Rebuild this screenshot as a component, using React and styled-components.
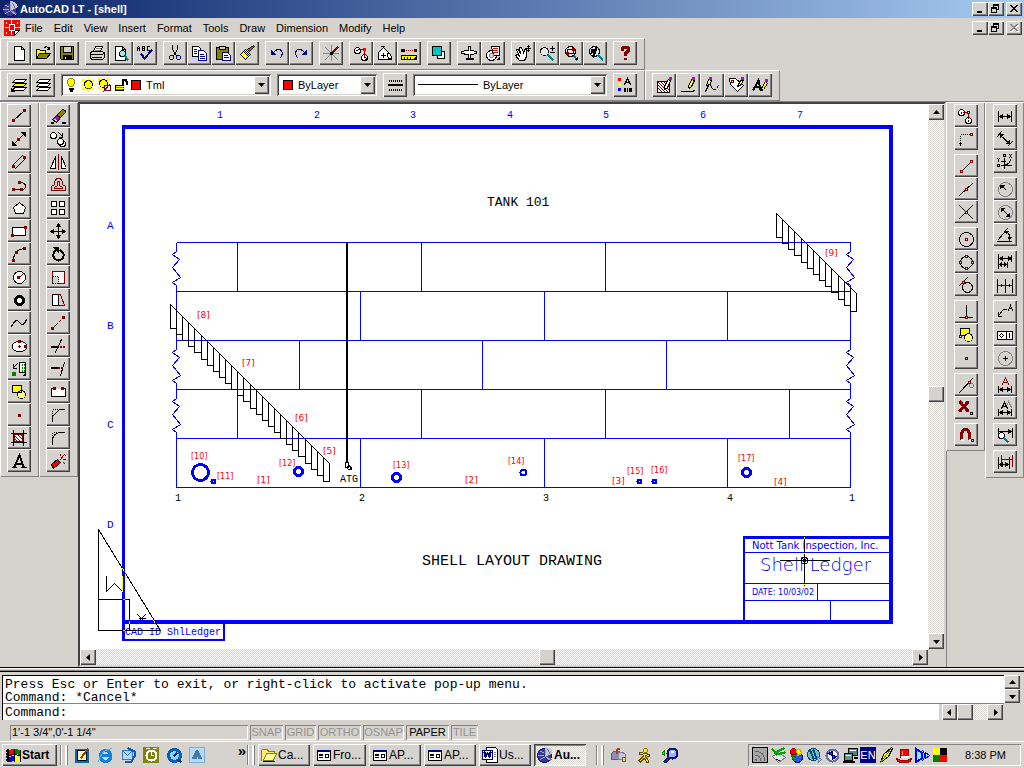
import React from "react";
import styled, { createGlobalStyle, css } from "styled-components";

const FACE = "#d6d3ce";
const SHADOW = "#848284";
const DARK = "#424142";
const BLUE = "#0000ff";

const Global = createGlobalStyle`
  *, *::before, *::after { box-sizing: border-box; }
  body { margin: 0; background: ${FACE}; }
  button, input, select { font: inherit; color: inherit; }
`;

const raised = css`
  box-shadow: inset 1px 1px #fff, inset -1px -1px ${DARK}, inset -2px -2px ${SHADOW};
`;
const sunken = css`
  box-shadow: inset 1px 1px ${SHADOW}, inset -1px -1px #fff;
`;
const dither = css`
  background: repeating-conic-gradient(#fff 0 25%, ${FACE} 0 50%) 0 0 / 2px 2px;
`;

/* ---------- icon drawing ---------- */

const K = "#000";
const R = "#840000";
const N = "#000084";
const Y = "#ffff00";
const W = "#fff";
const G = "#848284";
const O = "#848200";
const RED = "#ff0000";

const circ = (x, y, r) => `M${x - r} ${y}a${r} ${r} 0 1 0 ${2 * r} 0a${r} ${r} 0 1 0 ${-2 * r} 0`;
const dot = (x, y, c = R) => [`M${x - 1} ${y - 1}h2v2h-2z`, c, c];
const ring = (x, y) => [`M${x - 1} ${y - 1}h2v2h-2z`, R, W];
const corner = ["M14 12v2h-2z", K, K];

const icons = {
  new: [["M3 1h7l3 3v11h-10zM10 1v3h3", K, W]],
  open: [["M1 13v-9h3l1 1h5v3", K, Y], ["M1 13l3-5h11l-4 5z", K, O], ["M9 2q3-2 5 2M14 2v2h-2", K]],
  save: [["M1 1h13v13h-12l-1-1z", K, O], ["M4 1h8v6h-8z", K, FACE], ["M4 14v-4h8v4", K, K], ["M6 12v1", W]],
  print: [["M4 6l2-5h7l-2 5", K, W], ["M1 7l2-1h10l2 2v4l-2 2h-11l-1-2z", K, FACE], ["M1 9h12l2-2M3 12h9", K], ["M7 3h4M6 5h4", G], ["M10 10h2", Y]],
  preview: [["M2 1h7l3 3v11h-10zM9 1v3h3", K, W], [circ(9, 8, 3), K, "#a5e7e7"], ["M12 11l2 3", "#008284", "none", 2]],
  spell: [["M0 5v-3l1-1l1 1v3M1 3h1M5 1v4h2v-4zM5 3h2M12 1h-2v4h2", K], ["M4 9l3 4l7-8", N, "none", 2]],
  cut: [["M5 0v4l4 6M10 0v4l-4 6", K], [circ(4, 12, 2), N], [circ(11, 12, 2), N]],
  copy: [["M1 1h6l2 2v8h-8z", K, W], ["M7 5h5l3 3v7h-8z", N, W], ["M3 4h2M3 6h2M3 8h2M9 9h3M9 11h4M9 13h4", N]],
  paste: [["M1 2h12v12h-12z", K, O], ["M4 1h6v3h-6z", K, FACE], ["M7 7h5l3 3v5h-8z", N, W], ["M9 10h3M9 12h4", N]],
  brush: [["M14 0l1 1l-5 5l-2-2z", K, "#c65d00"], ["M6 4l5 5l-1 1l-5-5z", K, W], ["M4 6l5 5l-3 3l-5-5z", K, Y], ["M0 14l2-1l2 2", Y]],
  undo: [["M2 5v4h4z", N, N], ["M4 7q4-5 8-2q2 3-1 7", N]],
  redo: [["M13 5v4h-4z", N, N], ["M11 7q-4-5-8-2q-2 3 1 7", N]],
  track: [["M8 0v15M0 8h15M2 2l12 12M2 14l6-6", G], ["M9 7l5-5", R, "none", 2], ["M7 7h2v2h-2z", K, K]],
  osnap: [[circ(4, 5, 3), K, W], [circ(11, 12, 3), K, W], ["M5 4h6v7", R], dot(11, 4, RED), ["M3 5h1M11 12h1", K], corner],
  ucs: [["M1 7l5-5l5 5v7h-10z", K, W], ["M4 10h4M6 8v4", K], ["M10 8q3-1 4 4l-3 2z", K, W], ["M4 1h3", K], corner],
  dist: [["M1 5h1M14 5h1", K, K, 3], ["M4 5h9", R, "none", 1, "1 1"], ["M0 10h15v4h-15z", K, Y], ["M3 12v1M6 12v1M9 12v1", K], corner],
  redraw: [["M6 6h7v7h-7z", K, W], ["M1 1h9v9h-9z", K, "#00c3c6"]],
  aerial: [["M7 1h2v13h-2z", K, W], ["M0 6l6-1h4l5 1v2l-5 1h-4l-6-1z", K, W], ["M5 13h6", K, "none", 2], ["M8 3v9", W]],
  named: [[circ(6, 10, 5), K, W], ["M6 1h8v9h-6z", K, W], ["M8 3h4M8 5h4M8 7h4", RED], [circ(6, 10, 2), G, FACE], corner],
  pan: [["M4 15l-4-5l2-1l2 2l-3-7l2 0l2 4l-1-6h2l2 5l2-4l1 1v7l-2 4z", K, W], ["M13 0v6M10 3h6M12 1h2M12 5h2", K]],
  zoomrt: [[circ(5, 6, 4), K, "#e7e7e7"], ["M9 10l4 4", "#008284", "none", 2], ["M11 3h4M13 1v4M11 7h4", K]],
  zoomwin: [[circ(7, 6, 5), K, "#ffe7e7"], ["M4 4h6v4h-6z", K], dot(4, 8, R), dot(10, 4, R), ["M11 11l2 3", "#008284", "none", 2], corner],
  zoomprev: [[circ(7, 6, 5), K, "#e7e7e7"], ["M4 4h5l-3 3v4M4 4v4", K, K], ["M11 10l4 4", "#008284", "none", 2], ["M9 2l-3 9", K, "none", 2]],
  help: [["M5 4v-1l1-1h4l1 1v2l-3 3v1", R, "none", 3], ["M7 13h1", R, "none", 2]],
  layers: [["M1 13h11l3-3h-11z", K, W], ["M1 9h11l3-3h-11z", K, Y], ["M1 5h11l3-3h-11z", K, W], ["M0 13l3-3M0 11v3h3", K]],
  layers2: [["M1 13h11l3-3h-11z", K, W], ["M1 9h11l3-3h-11z", K, W], ["M1 5h11l3-3h-11z", K, W]],
  bulb: [["M4 9l-2-3v-3l2-2h3l2 2v3l-2 3z", O, Y], ["M4 11h3M5 13h1", K, "none", 2], ["M4 3v1", W]],
  sun: [["M1 2h2v2h-2zM11 2h1v2h-1zM1 11h2v1h-2zM11 11h1v1h-1zM6 1h2M6 13h2M1 7h1M12 7h1", Y, Y], [circ(7, 7, 4), K, Y], ["M4 3h6M4 11h6", O, "none", 1, "1 1"]],
  sunvp: [["M1 1h2v2h-2zM10 1h1v2h-1zM1 10h2v1h-2zM6 0h1M6 12h1M0 6h1", Y, Y], [circ(6, 6, 4), K, Y], ["M7 8h6v5h-6z", R, W], ["M12 7l-6 7", R]],
  lock: [["M2 8h8v5h-8z", K, O], ["M3 9h7M3 11h7", Y], ["M9 7v-3l1-2h2l1 2v2", K, "none", 2]],
  lweight: [["M1 3h14M1 12h14", K, "none", 2, "1 1"], ["M1 7h13", K, "none", 2]],
  props: [["M1 1h2v2h-2z", RED, RED], ["M1 6h2v2h-2z", Y, Y], ["M1 11h2v2h-2z", BLUE, BLUE], ["M7 7l3-6l3 6M8 5h4", K], ["M7 11h1v3h-1zM10 11v3M12 11h2v3h-2z", K, K]],
  edhatch: [["M1 4h12v11h-12z", K, W], ["M2 5l9 9M5 5l7 7M2 8l6 6M2 11l3 3M8 5l4 4", R], ["M12 2l-4 7v3l3-2l3-7z", K, W], dot(14, 1, "#c600c6")],
  edpline: [["M1 14h11l2-1", K], ["M11 2l-3 7l1 2l2-2l3-6z", K, Y], dot(13, 1, "#c600c6")],
  edspline: [["M1 14l4-8q4 9 7 5l2-3", K], ["M4 2l-2 6l4-1l1-4z", K, Y], dot(6, 1, "#c600c6")],
  edattr: [["M1 1h6l8 7l-6 6l-7-7z", K, W], [circ(4, 4, 1), R], ["M12 3l-3 6l3-1l3-5z", K, Y], dot(14, 1, "#c600c6")],
  edtext: [["M1 12l5-9l2 9M3 9h4", K, "none", 2], ["M13 4l-4 7v2l2-1l4-6z", K, Y], dot(14, 3, "#c600c6")],
  line: [["M2 12l11-10", K], dot(2, 12), dot(13, 2)],
  xline: [["M1 14l13-13", K], ["M1 14v-4l4 4zM14 1v4l-4-4z", K, K], dot(7, 8)],
  mline: [["M1 11l10-10l3 3l-10 10z", K], dot(2, 12), dot(13, 3)],
  pline: [["M2 12h9q4-1 3-4q-1-3-5-3", K], dot(2, 12), dot(10, 12), dot(8, 5)],
  polygon: [["M8 2l6 5l-2 6h-8l-2-6z", K, W]],
  rect: [["M1 4h13v8h-13z", K, W], dot(1, 12), dot(14, 4)],
  arc: [["M2 14q0-11 11-12", K], dot(2, 14), dot(5, 6), dot(13, 2)],
  circle: [[circ(8, 8, 6), K, W], ["M8 8l3-3", R], dot(7, 8)],
  donut: [[circ(8, 8, 4), K, W, 3]],
  spline: [["M0 11q4-9 8-4t7-3", K]],
  ellipse: [["M1 8q0-5 7-5t7 5t-7 5t-7-5", K, W], dot(8, 3), dot(14, 8), ["M7 8h2M8 7v2", R]],
  insert: [["M8 1h6v10h-6z", K, W], ["M10 3h4M10 6h4M10 9h4", "#008200", "none", 2, "1 1"], ["M1 11h3v3h-3z", "#008200", "#008200"], ["M6 2l-4 4M2 3v4h3", K], corner],
  region: [["M1 1h9v7h-9z", K, Y], [circ(10, 10, 4), K, "#ffff84"], ["M5 8h5v-3", K]],
  point: [dot(8, 8)],
  hatch: [["M2 0v15M12 0v15M0 3h15M0 12h15", K], ["M3 4h8v7h-8z", R, W], ["M3 5l6 6M6 4l5 5M3 8l3 3M9 4l2 2", R]],
  mtext: [["M3 13l5-11l4 11M5 10h5", K, "none", 2], ["M1 14h4M10 14h5", K]],
  erase: [["M1 14h1M12 14h2", K, "none", 2], ["M2 11l4-4l4 2l-4 5z", K, "#c600c6"], ["M6 7l6-6l3 1v2l-5 5z", K, O], ["M4 11l2 1", W]],
  copyobj: [[circ(3, 4, 3), K, W], [circ(12, 12, 3), K, W], [circ(10, 10, 3), K, W], ["M8 1l4 4M12 2v4h-3", K]],
  mirror: [["M5 2v12h-5z", K, W], ["M11 2v12h5z", K, W], ["M8 0v15", R]],
  offset: [["M1 13v-4l3-2q0-6 4-6t4 6l3 2v4z", R, FACE], ["M4 11v-1l3-2v-4h2v4l3 2v1z", R]],
  array: [["M1 1h5v5h-5zM9 1h5v5h-5zM1 9h5v5h-5zM9 9h5v5h-5z", K, W]],
  move: [["M8 1v14M1 8h14", K], ["M8 0l2 3h-4zM8 15l2-3h-4zM0 8l3-2v4zM15 8l-3-2v4z", K, K]],
  rotate: [["M5 4q-4 4-1 8q4 4 8 0q3-5-2-8", K, "none", 2], ["M3 1h5v5z", K, K]],
  scale: [["M2 2h12v12h-12z", R, W], ["M2 7h6v7h-6z", K, FACE, 1, "1 1"]],
  stretch: [["M2 2h6v11h-6z", K, W], ["M8 2h2l4 11h-6", R], ["M8 2v11", K, W, 1, "1 1"]],
  lengthen: [["M2 13l4-4", K], ["M6 9l7-7", R, "none", 1, "2 2"], dot(2, 13), dot(13, 2)],
  trim: [["M1 8h6", K, "none", 2], ["M9 8h6", R, "none", 2, "2 1"], ["M5 14l6-13", K]],
  extend: [["M1 6h5", K, "none", 2], ["M7 6h5", R, "none", 2, "2 1"], ["M10 14l4-13", K]],
  breakobj: [["M4 4h-3v8h14v-8h-3", K, W], dot(4, 4), dot(12, 4)],
  chamfer: [["M2 14v-5l7-7h5", K], ["M2 8v-6h6", K, "none", 1, "1 1"]],
  fillet: [["M2 14v-5q1-6 7-7h5", K], ["M2 7v-5h6", K, "none", 1, "1 1"]],
  explode: [["M1 11l6-5l3 3l-7 6z", K, RED], ["M10 6l3-4M13 6h2M10 2v-1M15 2l-1-1M13 9l1 1", R], ["M3 12l4-4", RED]],
  temptrack: [[circ(3, 4, 3), K, W], [circ(10, 12, 3), K, W], ["M3 4v1M10 12v1", K], ["M5 4h5v6", R], ring(10, 4)],
  snapfrom: [["M2 13v-10h9", K, "none", 1, "1 1"], ["M1 12h2M2 13v1", K], ring(13, 3)],
  endp: [["M3 13l10-10", K], ring(3, 13), ring(13, 3)],
  midp: [["M1 14l13-12", K], ring(8, 8)],
  inter: [["M1 1l13 13M14 1l-13 13", K], ring(8, 8)],
  center: [[circ(8, 8, 7), K], ring(8, 8)],
  quad: [[circ(8, 8, 6), K], ring(8, 2), ring(2, 8), ring(14, 8), ring(8, 14)],
  tangent: [[circ(9, 10, 5), K], ["M1 8l8-8", K], ring(5, 5)],
  perp: [["M8 1v12M1 13h13", K], ring(8, 13)],
  insp: [["M2 1h9v7h-9z", K, Y], [circ(10, 10, 4), K, "#ffff84"], ring(2, 9)],
  node: [ring(8, 8)],
  near: [["M1 15l13-14", K], [circ(13, 8, 2), G], ring(11, 5)],
  none: [["M2 2l7 8M9 2l-7 8", R, "none", 3], ["M12 12h2v2h-2z", K, W]],
  magnet: [["M3 11v-5q1-4 4-4t4 4v5", R, "none", 3], ["M3 12h1M11 12h1", W, "none", 2], ring(14, 13)],
  dlin: [["M1 3v10M14 3v10M1 8h13", K], ["M2 8l3-2v4zM13 8l-3-2v4z", K, K]],
  dali: [["M0 5l4-5M11 14l4-4M3 4l9 8", K], ["M3 3h3l-3 3zM12 12v-3l-3 3z", K, K]],
  dord: [["M0 4l1 1l1-1M1 5v2M6 0h2v2h-2zM12 0l2 3M14 0l-2 3M0 10h2v2h-2z", K], ["M7 4v10M4 7h4M4 11h10M8 10q4 0 5-5", K]],
  drad: [[circ(8, 8, 7), G], ["M8 8l-4-4", K], ["M3 4h4l-4 3z", K, K]],
  ddia: [[circ(8, 8, 7), G], ["M4 4l8 8", K], ["M4 4h3l-3 3zM12 12v-3l-3 3z", K, K]],
  dang: [["M0 14h14M1 12l9-11", K], ["M8 4q6 3 4 9", K], ["M8 4h3l-2 2zM11 10h3l-2 2z", K, K]],
  dbase: [["M1 0v14M1 4h13M1 10h9M14 1v6M10 8v5", K], ["M2 4l3-2v4zM14 4l-3-2v4zM2 10l2-2v4zM9 10l-2-2v4z", K, K]],
  dcont: [["M0 2v13M8 2v13M15 2v13", K], ["M1 8h14", R], ["M4 7v2M12 7v2", K]],
  leader: [["M1 11l5-6h3M1 8v4h3", K], ["M11 6l2-5l2 5M12 4h2", K]],
  tol: [["M0 4h15v8h-15zM9 4v8M12 6v4", K, W], ["M4 6l2 2l-2 2l-2-2z", K]],
  cmark: [[circ(8, 8, 7), G], ["M6 8h4M8 6v4", K]],
  dedit: [["M5 7l3-7l3 7M6 5h4", R], ["M1 9v6M14 9v6M1 12h13", K], ["M2 12l3-2v4zM13 12l-3-2v4z", K, K]],
  dtedit: [["M9 6l2-5l3 6", G], ["M4 8l3-6l3 6M5 6h4", K], ["M1 9v6M14 9v6M1 12h13", K], ["M2 12l3-2v4zM13 12l-3-2v4z", K, K]],
  dstyle: [["M1 1v9M15 1v9M1 4h14", K], ["M14 4l-3-2v4z", K, K], [circ(4, 8, 3), K, W], ["M7 11l3 3", "#008284", "none", 2]],
  dupd: [["M1 3v11M12 3v11M1 10h11", K], ["M4 1v11M15 1v11M4 5h11", R], ["M2 10l3-2v4zM11 10l-3-2v4z", K, K]],
  min: [["M5 9h4M5 10h4", K]],
  restore: [["M5 2h5v5h-2M5 2v2M5 3h5", K], ["M3 5h5v5h-5zM3 6h5", K]],
  close: [["M4 3l6 6M10 3l-6 6M5 3l6 6M11 3l-6 6", K]],
  closeoff: [["M5 4l6 6M11 4l-6 6M6 4l6 6M12 4l-6 6", W], ["M4 3l6 6M10 3l-6 6M5 3l6 6M11 3l-6 6", G]],
  app: [[circ(7, 8, 7), "#10106b", "#39398c"], ["M8 0l4 1l3 4l-7 4z", "#c6c7d6", "#c6c7d6"], ["M10 2l3 5M8 9l6 3", "#6b6d8c"], ["M3 4l3 1M1 8h5M8 1v8l5 4M3 12l5-3", "#a5a6ce"]],
  mdi: [["M0 0h15v10l-5 5h-10z", RED, RED], ["M10 15v-5h5z", K, W], ["M5 4h5v6h-5zM7 0v4M7 10v4M1 7h4M10 7h5", W], ["M2 2v1M13 2v1M2 12v1", W]],
  flag: [["M1 3l2-2v13l-2-1z", K, K, 1, "2 1"], ["M4 3l4-1v5l-4 1z", RED, RED], ["M10 2l4 1v4l-4-1z", "#008200", "#008200"], ["M4 10l4-1v4l-4 1z", BLUE, BLUE], ["M10 9l4 1v4l-4-1z", Y, Y], ["M9 2v12M15 3v11M4 8l4-1l7 1", K]],
  qdesk: [["M1 2h13v13h-13z", "#006da5", "#006da5"], ["M3 3h9v10h-9z", K, "#f7efc6"], ["M13 2l-6 8", "#8c4500", "none", 2]],
  ie: [["M13 11q-5 6-9 1q-3-7 3-9q6 0 6 5h-8", "#1082de", "none", 3], ["M1 14q3-12 13-13", "#5ab6f7"]],
  mail: [["M2 3h10v9h-10z", "#3179c6", "#b5d7f7"], ["M3 4l4 4l4-4", "#3179c6"], ["M8 1l6 3v5l-3 5h-6", "#1059b5", "none", 2]],
  clock: [["M0 0h15v15h-15z", O, O], [circ(8, 8, 5), W, "none", 2], ["M8 5v3h2", W], ["M3 1h3M10 1h3", W]],
  qt: [[circ(8, 8, 6), "#0061b5", "#8cd3f7", 3], ["M8 8l2-2M12 13l2 1", "#00308c", "none", 2]],
  msn: [["M0 0h15v15h-15z", "#7baede", "#b5dbf7"], ["M7 3l-4 8h4M8 3l4 8h-3l-1-4z", "#4279b5", "#4279b5"]],
  folder: [["M0 13v-10l1-1h5l1 2h6v2", O, "#ffe784"], ["M2 13l3-7h10l-3 7z", O, "#ffff9c"], ["M2 14h11", K]],
  form: [["M1 3h13v10h-13z", K, W], ["M1 3h13v1h-13z", N, N], ["M3 7h3M3 10h3M3 8h3M9 7h3v3h-3z", K]],
  word: [["M4 0h9l2 2v13h-11z", K, W], ["M0 3h10v9h-10z", N, W], ["M2 5l1 4l2-3l2 3l1-4", N, "none", 2], ["M12 5h1M12 7h1M12 9h1", G]],
  postbox: [["M1 7q0-3 3-3h5v8h-8z", "#5a5d8c", "#8c8eb5"], ["M8 5q6-1 7 3v4h-7", "#7b7d9c", "#c6c7de"], ["M6 2v3M7 1h1", "#c63900", "none", 2], ["M12 10h3v4h-3z", "#8c5d21", "#efcf94"]],
  runner: [["M4 6l5 1l-2 3l-3 3M8 10l2 2l1 2M9 7l3 1", "#5a4500", "none", 3], [circ(9, 3, 2), O, "#ffdf39"], ["M4 6l5 1l-2 3l-3 3M8 10l2 2l1 2M9 7l3 1", "#ffdf39"]],
  lens: [["M2 3v5l-3-2z", "#008200", "#42c342"], [circ(10, 6, 5), "#10107b", "#9cb2ff", 2], ["M6 11l-3 3", "#21205a", "none", 3], ["M9 4h1", W, "none", 2]],
  rss: [["M0 0h15v15h-15z", K, "#a5a6a5"], ["M3 4q9 0 9 9M3 8q5 0 5 5M3 12h1v1", "#636163"]],
  card: [["M2 9l6-4l7 5l-7 5z", SHADOW, "#e7e7e7"], ["M2 2l3 3l8-4M2 2l4 5l8-2", "#00a200", "none", 2], ["M6 12l3 1", K]],
  gems: [[circ(9, 10, 5), "#001084", "#2159e7"], [circ(5, 4, 3), "#a50000", RED], ["M8 2l4 0l1 4l-4 2z", "#d6a600", Y], ["M3 8l4 2l-2 3z", "#008200", "#00c300"]],
  globe: [[circ(7, 7, 6), "#004d73", "#73b6ce"], ["M4 4l3 7M7 3l3 8", "#004d73", "none", 2], ["M11 9l4 3l-3 3z", "#5a86b5", "#a5c3de"]],
  sync: [[circ(8, 8, 6), "#63719c", "#f7f7ff", 2], ["M4 6l4-2v4zM12 9l-4 3v-4z", N, "#2149c6"]],
  net: [["M6 1h9v7h-9z", K, "#5a8284"], ["M2 6h8v7h-8z", K, "#639294"], ["M1 14h10M12 10h2", K, "none", 2], ["M4 8h4M8 3h5", W]],
  bolt: [["M13 0l-8 7l-3 8l8-6l4-8z", K, Y], ["M2 15l10-13", O]],
  hat: [["M4 2h8v8h-8z", "#a50000", RED], ["M0 11q8 5 15 0q-1 5-7 4q-7 1-8-4", "#a50000", RED], ["M5 9h6", W, "none", 2], ["M6 12h4", Y], ["M6 4v3", "#ff9c9c"]],
  speaker: [["M1 1l6 4v6l-6 4z", BLUE, "#8cefff", 2], ["M8 3q4 5 0 10", BLUE], ["M11 5l4 3l-4 3z", BLUE, "#8cefff"]],
  quadrant: [["M1 1h6v6h-6z", Y, Y], ["M8 1h6v6h-6z", K, K], ["M1 8h6v6h-6z", "#008200", "#008200"], ["M8 8h6v6h-6z", RED, RED]],
};

const IconSvg = styled.svg`
  display: block;
  flex: none;
  width: 16px;
  height: 16px;
`;

function Icon({ name }) {
  return (
    <IconSvg viewBox="0 0 16 16" aria-hidden="true" shapeRendering="crispEdges">
      <g transform="translate(.5 .5)">
        {icons[name].map(([d, stroke, fill = "none", w = 1, dash], i) => (
          <path
            key={i}
            d={d}
            stroke={stroke}
            fill={fill}
            strokeWidth={w}
            strokeDasharray={dash}
            strokeLinecap={dash ? "butt" : "square"}
          />
        ))}
      </g>
    </IconSvg>
  );
}

/* ---------- window chrome ---------- */

const Desktop = styled.div`
  display: flex;
  flex-direction: column;
  min-width: 1000px;
  background: ${FACE};
  color: #000;
  font: 11px/14px "Liberation Sans", Arial, sans-serif;
`;

const TitleBar = styled.header`
  display: flex;
  align-items: center;
  height: 18px;
  padding: 0 2px;
  gap: 2px;
  background: linear-gradient(90deg, #0a246a, #a6caf0);
  color: #fff;
`;

const WindowTitle = styled.h1`
  flex: 1;
  margin: 0;
  font-size: 11px;
  line-height: 14px;
  font-weight: bold;
`;

const WindowButtons = styled.div`
  display: flex;
  margin-left: auto;
`;

const WindowButton = styled.button`
  display: flex;
  align-items: flex-start;
  width: 16px;
  height: 14px;
  margin-left: ${(p) => (p.$apart ? "2px" : "0")};
  padding: 0;
  border: 0;
  overflow: hidden;
  background: ${FACE};
  ${raised}
`;

function WindowControls({ inactive }) {
  return (
    <WindowButtons>
      <WindowButton aria-label="Minimize"><Icon name="min" /></WindowButton>
      <WindowButton aria-label="Restore"><Icon name="restore" /></WindowButton>
      <WindowButton aria-label="Close" $apart disabled={inactive}>
        <Icon name={inactive ? "closeoff" : "close"} />
      </WindowButton>
    </WindowButtons>
  );
}

const MenuBar = styled.nav`
  display: flex;
  align-items: center;
  height: 20px;
  padding: 0 2px 0 4px;
`;

const MenuItem = styled.button`
  padding: 0 6px 0 5px;
  border: 0;
  background: none;
  line-height: 16px;
`;

/* ---------- horizontal toolbars ---------- */

const ToolbarRow = styled.div`
  display: flex;
`;

const Toolbar = styled.div`
  display: flex;
  align-items: center;
  gap: 6px;
  height: ${(p) => p.$height || 32}px;
  padding: 0 7px 2px;
  border-top: 1px solid #fff;
  border-right: 1px solid ${SHADOW};
  border-bottom: 1px solid ${SHADOW};
  box-shadow: inset 1px 0 #fff;
`;

const ButtonGroup = styled.div`
  display: flex;
`;

const ToolButton = styled.button`
  display: grid;
  place-items: center;
  width: 24px;
  height: ${(p) => p.$height || 24}px;
  padding: 0;
  border: 0;
  background: ${FACE};
  ${raised}
`;

const ComboBox = styled.label`
  display: flex;
  align-items: center;
  width: ${(p) => p.$width}px;
  height: 22px;
  padding: 2px 2px 2px 4px;
  background: #fff;
  box-shadow: inset 1px 1px ${SHADOW}, inset -1px -1px #fff, inset 2px 2px ${DARK}, inset -2px -2px ${FACE};
`;

const ComboSelect = styled.select`
  flex: 1;
  min-width: 0;
  padding: 0;
  border: 0;
  outline: 0;
  appearance: none;
  background: transparent;
`;

const Swatch = styled.span`
  flex: none;
  width: 10px;
  height: 10px;
  margin: 0 5px 0 2px;
  border: 1px solid #000;
  background: #f00;
`;

const LineSample = styled.span`
  flex: none;
  width: 60px;
  height: 1px;
  margin: 0 5px 0 1px;
  background: #000;
`;

const ArrowBox = styled.span`
  display: grid;
  place-items: center;
  flex: none;
  width: 15px;
  height: 18px;
  background: ${FACE};
  ${raised}
`;

const ArrowSvg = styled.svg`
  display: block;
  width: 7px;
  height: 7px;
`;

const arrowPaths = {
  up: "M0 5h7L3.5 1z",
  down: "M0 2h7L3.5 6z",
  left: "M5 0v7L1 3.5z",
  right: "M2 0v7L6 3.5z",
};

function Arrow({ dir }) {
  return (
    <ArrowSvg viewBox="0 0 7 7" aria-hidden="true">
      <path d={arrowPaths[dir]} />
    </ArrowSvg>
  );
}

function Combo({ label, width, value, children }) {
  return (
    <ComboBox $width={width}>
      {children}
      <ComboSelect aria-label={label} defaultValue={value}>
        <option>{value}</option>
      </ComboSelect>
      <ArrowBox><Arrow dir="down" /></ArrowBox>
    </ComboBox>
  );
}

function Tools({ names, height }) {
  return names.map((n) => (
    <ToolButton key={n} aria-label={n} $height={height}><Icon name={n} /></ToolButton>
  ));
}

const standardGroups = [
  ["new", "open", "save"],
  ["print", "preview", "spell"],
  ["cut", "copy", "paste", "brush"],
  ["undo", "redo"],
  ["track"],
  ["osnap", "ucs", "dist"],
  ["redraw"],
  ["aerial", "named"],
  ["pan", "zoomrt", "zoomwin", "zoomprev"],
  ["help"],
];

/* ---------- work area ---------- */

const WorkArea = styled.main`
  display: flex;
  align-items: stretch;
  border-top: 1px solid ${SHADOW};
`;

const Dock = styled.aside`
  display: flex;
  flex: none;
  align-items: flex-start;
`;

const Palette = styled.div`
  display: flex;
  flex-direction: column;
  gap: 4px;
  width: 39px;
  padding: ${(p) => (p.$right ? "2px 7px 5px 8px" : "2px 8px 5px 7px")};
  box-shadow: inset 1px 1px #fff, inset -1px -1px ${SHADOW};
`;

const PaletteGroup = styled.div`
  display: flex;
  flex-direction: column;
`;

const leftPalettes = [
  [["line", "xline", "mline", "pline", "polygon", "rect", "arc", "circle", "donut", "spline", "ellipse", "insert", "region", "point", "hatch", "mtext"]],
  [["erase", "copyobj", "mirror", "offset", "array", "move", "rotate", "scale", "stretch", "lengthen", "trim", "extend", "breakobj", "chamfer", "fillet", "explode"]],
];
const rightPalettes = [
  [["temptrack", "snapfrom"], ["endp", "midp", "inter"], ["center", "quad", "tangent"], ["perp", "insp", "node"], ["near", "none"], ["magnet"]],
  [["dlin", "dali", "dord"], ["drad", "ddia", "dang"], ["dbase", "dcont"], ["leader", "tol", "cmark"], ["dedit", "dtedit"], ["dstyle"], ["dupd"]],
];

function PaletteDock({ palettes, right }) {
  return (
    <Dock>
      {palettes.map((groups, i) => (
        <Palette key={i} $right={right}>
          {groups.map((g, j) => (
            <PaletteGroup key={j}><Tools names={g} height={23} /></PaletteGroup>
          ))}
        </Palette>
      ))}
    </Dock>
  );
}

const DrawingWindow = styled.section`
  flex: 1;
  min-width: 0;
  display: grid;
  grid-template-columns: minmax(0, 1fr) 16px;
  border-style: solid;
  border-width: 2px;
  border-color: ${DARK} ${FACE} ${FACE} ${DARK};
  box-shadow: 1px 0 ${SHADOW};
`;

const DrawingSvg = styled.svg`
  display: block;
  width: 100%;
  height: auto;
  background: #fff;
`;

const cadFonts = {
  mono: '"Liberation Mono", monospace',
  sans: '"DejaVu Sans", sans-serif',
  light: '"DejaVu Sans Light", "Open Sans Light", "Open Sans", sans-serif',
};

const CadText = styled.text`
  font-family: ${(p) => cadFonts[p.$face || "mono"]};
  font-size: ${(p) => p.$size}px;
  font-weight: ${(p) => (p.$face === "light" ? 300 : 400)};
  fill: ${(p) => p.$color || "#000"};
  stroke: none;
`;

const ScrollBar = styled.div`
  display: flex;
  flex-direction: ${(p) => (p.$vertical ? "column" : "row")};
  ${dither}
`;

const ScrollButton = styled.button`
  display: grid;
  place-items: center;
  flex: none;
  width: ${(p) => p.$width || 16}px;
  height: ${(p) => p.$height || 16}px;
  padding: 0;
  border: 0;
  background: ${FACE};
  ${raised}
`;

const Track = styled.span`
  flex: ${(p) => p.$part};
`;

const stairs = (x, y, steps, run) => {
  const pitch = run / steps;
  let d = `M${x} ${y}L${x + run} ${y + run}V${y + run + 18}`;
  for (let i = 0; i < steps; i += 1) {
    const px = Math.round(x + i * pitch);
    const nx = Math.round(x + (i + 1) * pitch);
    const off = Math.round(i * pitch);
    d += `M${px} ${y + off}V${y + off + 24}H${nx}`;
  }
  return d;
};

const breakLine = (x, y) => `M${x} ${y}v9l-4 3l7 5l-7 8l8 10l-8 5l4 3v6`;

const courses = [
  [242, [237, 421, 605]],
  [291, [360, 544, 727]],
  [340, [299, 482, 666]],
  [389, [237, 421, 605, 789]],
  [438, [360, 544, 727]],
];

const tags = [
  ["[8]", 197, 318], ["[7]", 242, 366], ["[6]", 295, 421], ["[5]", 323, 454],
  ["[10]", 191, 459], ["[11]", 217, 479], ["[12]", 279, 466], ["[1]", 257, 483],
  ["[13]", 393, 468], ["[2]", 465, 483], ["[14]", 508, 464], ["[15]", 627, 474],
  ["[16]", 651, 473], ["[3]", 612, 484], ["[17]", 738, 461], ["[4]", 774, 485], ["[9]", 825, 256],
];

const nozzles = [
  [200, 472, 8, 3], [213, 481, 2, 2], [298, 471, 4, 3], [396, 477, 4, 3],
  [523, 472, 3, 2], [639, 481, 2, 2], [654, 481, 2, 2], [746, 472, 4, 3],
];

function Drawing() {
  return (
    <DrawingSvg viewBox="80 104 848 545" role="img" aria-label="Tank 101 shell layout drawing">
      <g transform="translate(.5 .5)" shapeRendering="crispEdges" fill="none" stroke={BLUE}>
        <path d={courses.map(([y, xs]) => `M176 ${y}H850` + xs.map((x) => `M${x} ${y}v49`).join("")).join("") + "M176 487H850"} />
        <path d="M176 291v49M176 438v49M850 291v49M850 438v49" />
        <path d={[242, 340, 389].map((y) => breakLine(176, y) + breakLine(850, y)).join("")} />
        <path d="M743 552H889M743 583H889M743 600H889M817 583v17M830 600v20" />
        {nozzles.map(([x, y, r, w]) => (
          <circle key={x} cx={x} cy={y} r={r} strokeWidth={w} />
        ))}
      </g>
      <g fill={BLUE} shapeRendering="crispEdges">
        <path d="M122 125H893V129H122zM122 125H125V641H122zM889 125H893V624H889zM122 620H893V624H122zM122 639H225V641H122zM223 624H225V641H223z" />
        <path d="M743 536H889V539H743zM743 536H745V620H743z" />
      </g>
      {[1, 2, 3, 4, 5, 6, 7].map((n, i) => (
        <CadText key={n} x={217 + Math.round(i * 96.6)} y={118} $size={10} $color={BLUE}>{n}</CadText>
      ))}
      {["A", "B", "C", "D"].map((n, i) => (
        <CadText key={n} x={107} y={229 + Math.round(i * 99.5)} $size={11} $color={BLUE}>{n}</CadText>
      ))}
      {[[1, 175], [2, 359], [3, 543], [4, 727], [1, 849]].map(([n, x]) => (
        <CadText key={x} x={x} y={501} $size={10}>{n}</CadText>
      ))}
      <CadText x={487} y={206} $size={13}>TANK 101</CadText>
      <CadText x={422} y={565} $size={15}>SHELL LAYOUT DRAWING</CadText>
      <CadText x={340} y={482} $size={10}>ATG</CadText>
      {tags.map(([t, x, y]) => (
        <CadText key={t} x={x} y={y} $size={t.length > 3 ? 8 : 9} $face="sans" $color="#ff0000">{t}</CadText>
      ))}
      <CadText x={752} y={549} $size={10} $face="sans" $color={BLUE}>Nott Tank Inspection, Inc.</CadText>
      <CadText x={760} y={571} $size={18} $face="light" $color={BLUE}>Shell Ledger</CadText>
      <CadText x={752} y={595} $size={8} $face="sans" $color={BLUE}>DATE: 10/03/02</CadText>
      <CadText x={125} y={635} $size={10} $color={BLUE}>CAD ID ShlLedger</CadText>
      <g transform="translate(.5 .5)" shapeRendering="crispEdges" fill="none" stroke="#000">
        <path d={stairs(170, 304, 26, 159) + stairs(776, 213, 13, 80)} />
        <path d="M345 462h3v5h-3zM347 466l2-1l2 2v2h-3l-2-2M348 464l3 5" />
        <path d="M98 529V630H160zM98 599H129V630M106 575v16l8-8l8 8M137 614l8 8M145 614l-8 8M138 618h7" />
        <path d="M804 535v50M779 560h50M802 557h4l1 1v4l-1 1h-4l-1-1v-4zM802 558l4 4M806 558l-4 4" />
        <path stroke="#ffff00" d="M122 575v16M122 599h2M122 630h2M122 568l2 3M153 620l2 3M804 536v2M804 552v1M804 583v1M129 620v3" />
      </g>
      <path fill="#000" d="M346 242h2v220h-2z" />
    </DrawingSvg>
  );
}

/* ---------- command window ---------- */

const Splitter = styled.div`
  height: 8px;
  border-top: 1px solid #000;
  box-shadow: inset 0 1px #fff, inset 0 -3px ${FACE}, inset 0 -4px #000, inset 0 -5px ${SHADOW};
`;

const CommandWindow = styled.section`
  display: flex;
  flex-direction: column;
  margin: 0 2px 0 2px;
  font: 13px/13px "Liberation Mono", "Courier New", monospace;
`;

const CommandRow = styled.div`
  display: flex;
  border-left: 1px solid #000;
`;

const History = styled.div`
  flex: 1;
  height: 29px;
  padding: 2px 0 0 2px;
  border-top: 1px solid #000;
  border-bottom: 1px solid ${SHADOW};
  background: #fff;
`;

const HistoryLine = styled.p`
  margin: 0;
`;

const SmallScroll = styled.div`
  display: flex;
  flex-direction: column;
  flex: none;
  margin-right: 2px;
`;

const PromptRow = styled.div`
  display: flex;
  flex: 1;
  align-items: center;
  height: 16px;
  padding: 1px 0 0 2px;
  border-bottom: 1px solid #fff;
  background: #fff;
`;

const PromptInput = styled.input`
  flex: 1;
  min-width: 0;
  margin-left: 8px;
  padding: 0;
  border: 0;
  outline: 0;
  background: transparent;
`;

const PromptScroll = styled(ScrollBar)`
  flex: none;
  width: 61px;
  margin: 0 19px 0 3px;
`;

/* ---------- status bar ---------- */

const StatusBar = styled.footer`
  display: flex;
  gap: 2px;
  padding: 5px 0 1px 10px;
`;

const Coordinates = styled.output`
  width: 238px;
  height: 15px;
  padding-left: 2px;
  line-height: 15px;
  ${sunken}
`;

const ModeButton = styled.button`
  width: ${(p) => p.$width}px;
  height: 15px;
  padding: 0;
  border: 0;
  background: none;
  line-height: 15px;
  white-space: nowrap;
  color: ${(p) => (p.$on ? "#000" : "#949294")};
  ${sunken}
`;

const modes = [["SNAP", 33], ["GRID", 31], ["ORTHO", 43], ["OSNAP", 41], ["PAPER", 43], ["TILE", 27]];

/* ---------- taskbar ---------- */

const TaskBar = styled.footer`
  display: flex;
  align-items: center;
  height: 27px;
  padding: 0 3px 0 2px;
  border-top: 1px solid #fff;
`;

const TaskButton = styled.button`
  display: flex;
  align-items: center;
  gap: 1px;
  flex: none;
  width: ${(p) => p.$width}px;
  height: 22px;
  margin-right: 3px;
  padding: 0 3px;
  border: 0;
  background: ${FACE};
  white-space: nowrap;
  overflow: hidden;
  font-size: 12px;
  font-weight: ${(p) => (p.$bold ? "bold" : "normal")};
  ${raised}
  ${(p) => p.$pressed && css`
    ${dither}
    box-shadow: inset 1px 1px ${DARK}, inset -1px -1px #fff, inset 2px 2px ${SHADOW};
  `}
`;

const Grip = styled.span`
  flex: none;
  width: 8px;
  height: 20px;
  margin: 0 ${(p) => p.$after || 4}px 0 ${(p) => p.$before || 0}px;
  border-left: 1px solid ${SHADOW};
  border-right: 1px solid ${SHADOW};
  box-shadow: inset 1px 0 #fff, inset -2px 0 #fff;
`;

const QuickLaunch = styled.div`
  display: flex;
  align-items: center;
  gap: 7px;
`;

const IconButton = styled.button`
  display: block;
  flex: none;
  padding: 0;
  border: 0;
  background: none;
`;

const Chevron = styled.button`
  margin-left: auto;
  padding: 0 0 8px;
  border: 0;
  background: none;
  font-size: 15px;
  line-height: 14px;
  font-weight: bold;
`;

const LaunchZone = styled.div`
  display: flex;
  align-items: center;
  flex: none;
  width: 172px;
`;

const LinkZone = styled(QuickLaunch)`
  gap: 10px;
`;

const Tray = styled.div`
  display: flex;
  align-items: center;
  gap: 2px;
  width: 273px;
  height: 22px;
  margin-left: auto;
  padding: 0 15px 0 4px;
  ${sunken}
`;

const Language = styled.span`
  width: 16px;
  height: 16px;
  background: #000084;
  color: #fff;
  line-height: 16px;
  text-align: center;
`;

const Clock = styled.time`
  margin-left: auto;
`;

const tasks = [
  ["folder", "Ca...", 52], ["form", "Fro...", 53], ["form", "AP...", 52],
  ["form", "AP...", 52], ["word", "Us...", 52], ["app", "Au...", 52],
];

export default function App() {
  return (
    <Desktop>
      <Global />
      <TitleBar>
        <Icon name="app" />
        <WindowTitle>AutoCAD LT - [shell]</WindowTitle>
        <WindowControls />
      </TitleBar>
      <MenuBar>
        <Icon name="mdi" />
        {["File", "Edit", "View", "Insert", "Format", "Tools", "Draw", "Dimension", "Modify", "Help"].map((m) => (
          <MenuItem key={m}>{m}</MenuItem>
        ))}
        <WindowControls inactive />
      </MenuBar>

      <ToolbarRow>
        <Toolbar>
          {standardGroups.map((g) => (
            <ButtonGroup key={g[0]}><Tools names={g} /></ButtonGroup>
          ))}
        </Toolbar>
      </ToolbarRow>
      <ToolbarRow>
        <Toolbar $height={31}>
          <ButtonGroup><Tools names={["layers", "layers2"]} /></ButtonGroup>
          <Combo label="Layer" width={210} value="Tml">
            <Icon name="bulb" />
            <Icon name="sun" />
            <Icon name="sunvp" />
            <Icon name="lock" />
            <Swatch />
          </Combo>
          <Combo label="Color" width={100} value="ByLayer"><Swatch /></Combo>
          <ButtonGroup><Tools names={["lweight"]} /></ButtonGroup>
          <Combo label="Linetype" width={194} value="ByLayer"><LineSample /></Combo>
          <ButtonGroup><Tools names={["props"]} /></ButtonGroup>
        </Toolbar>
        <Toolbar $height={31}>
          <ButtonGroup><Tools names={["edhatch", "edpline", "edspline", "edattr", "edtext"]} /></ButtonGroup>
        </Toolbar>
      </ToolbarRow>

      <WorkArea>
        <PaletteDock palettes={leftPalettes} />
        <DrawingWindow>
          <Drawing />
          <ScrollBar $vertical>
            <ScrollButton aria-label="Scroll up"><Arrow dir="up" /></ScrollButton>
            <Track $part={266} />
            <ScrollButton aria-label="Vertical position" />
            <Track $part={231} />
            <ScrollButton aria-label="Scroll down"><Arrow dir="down" /></ScrollButton>
          </ScrollBar>
          <ScrollBar>
            <ScrollButton aria-label="Scroll left"><Arrow dir="left" /></ScrollButton>
            <Track $part={443} />
            <ScrollButton aria-label="Horizontal position" />
            <Track $part={357} />
            <ScrollButton aria-label="Scroll right"><Arrow dir="right" /></ScrollButton>
          </ScrollBar>
        </DrawingWindow>
        <PaletteDock palettes={rightPalettes} right />
      </WorkArea>

      <Splitter />
      <CommandWindow>
        <CommandRow>
          <History role="log">
            <HistoryLine>Press Esc or Enter to exit, or right-click to activate pop-up menu.</HistoryLine>
            <HistoryLine>Command: *Cancel*</HistoryLine>
          </History>
          <SmallScroll>
            <ScrollButton $height={14} aria-label="Older"><Arrow dir="up" /></ScrollButton>
            <ScrollButton $height={14} aria-label="Newer"><Arrow dir="down" /></ScrollButton>
          </SmallScroll>
        </CommandRow>
        <CommandRow>
          <PromptRow>
            <label htmlFor="prompt">Command:</label>
            <PromptInput id="prompt" />
          </PromptRow>
          <PromptScroll>
            <ScrollButton $width={15} aria-label="Scroll left"><Arrow dir="left" /></ScrollButton>
            <ScrollButton aria-label="Position" />
            <Track $part={1} />
            <ScrollButton aria-label="Scroll right"><Arrow dir="right" /></ScrollButton>
          </PromptScroll>
        </CommandRow>
      </CommandWindow>

      <StatusBar>
        <Coordinates>1'-1 3/4",0'-1 1/4"</Coordinates>
        {modes.map(([m, w]) => (
          <ModeButton key={m} $width={w} $on={m === "PAPER"}>{m}</ModeButton>
        ))}
      </StatusBar>

      <TaskBar>
        <TaskButton $width={55} $bold><Icon name="flag" />Start</TaskButton>
        <Grip $after={6} />
        <LaunchZone>
          <QuickLaunch>
            {["qdesk", "ie", "mail", "clock", "qt", "msn"].map((n) => (
              <IconButton key={n} aria-label={n}><Icon name={n} /></IconButton>
            ))}
          </QuickLaunch>
          <Chevron aria-label="More">»</Chevron>
        </LaunchZone>
        <Grip $after={3} $before={1} />
        {tasks.map(([icon, text, width], i) => (
          <TaskButton key={i} $width={width} $pressed={icon === "app"} $bold={icon === "app"}>
            <Icon name={icon} />{text}
          </TaskButton>
        ))}
        <Grip $after={6} $before={7} />
        <LinkZone>
          {["postbox", "runner", "lens"].map((n) => (
            <IconButton key={n} aria-label={n}><Icon name={n} /></IconButton>
          ))}
        </LinkZone>
        <Tray>
          {["rss", "card", "gems", "globe", "sync", "net"].map((n) => <Icon key={n} name={n} />)}
          <Language>EN</Language>
          {["bolt", "hat", "speaker", "quadrant"].map((n) => <Icon key={n} name={n} />)}
          <Clock>8:38 PM</Clock>
        </Tray>
      </TaskBar>
    </Desktop>
  );
}
